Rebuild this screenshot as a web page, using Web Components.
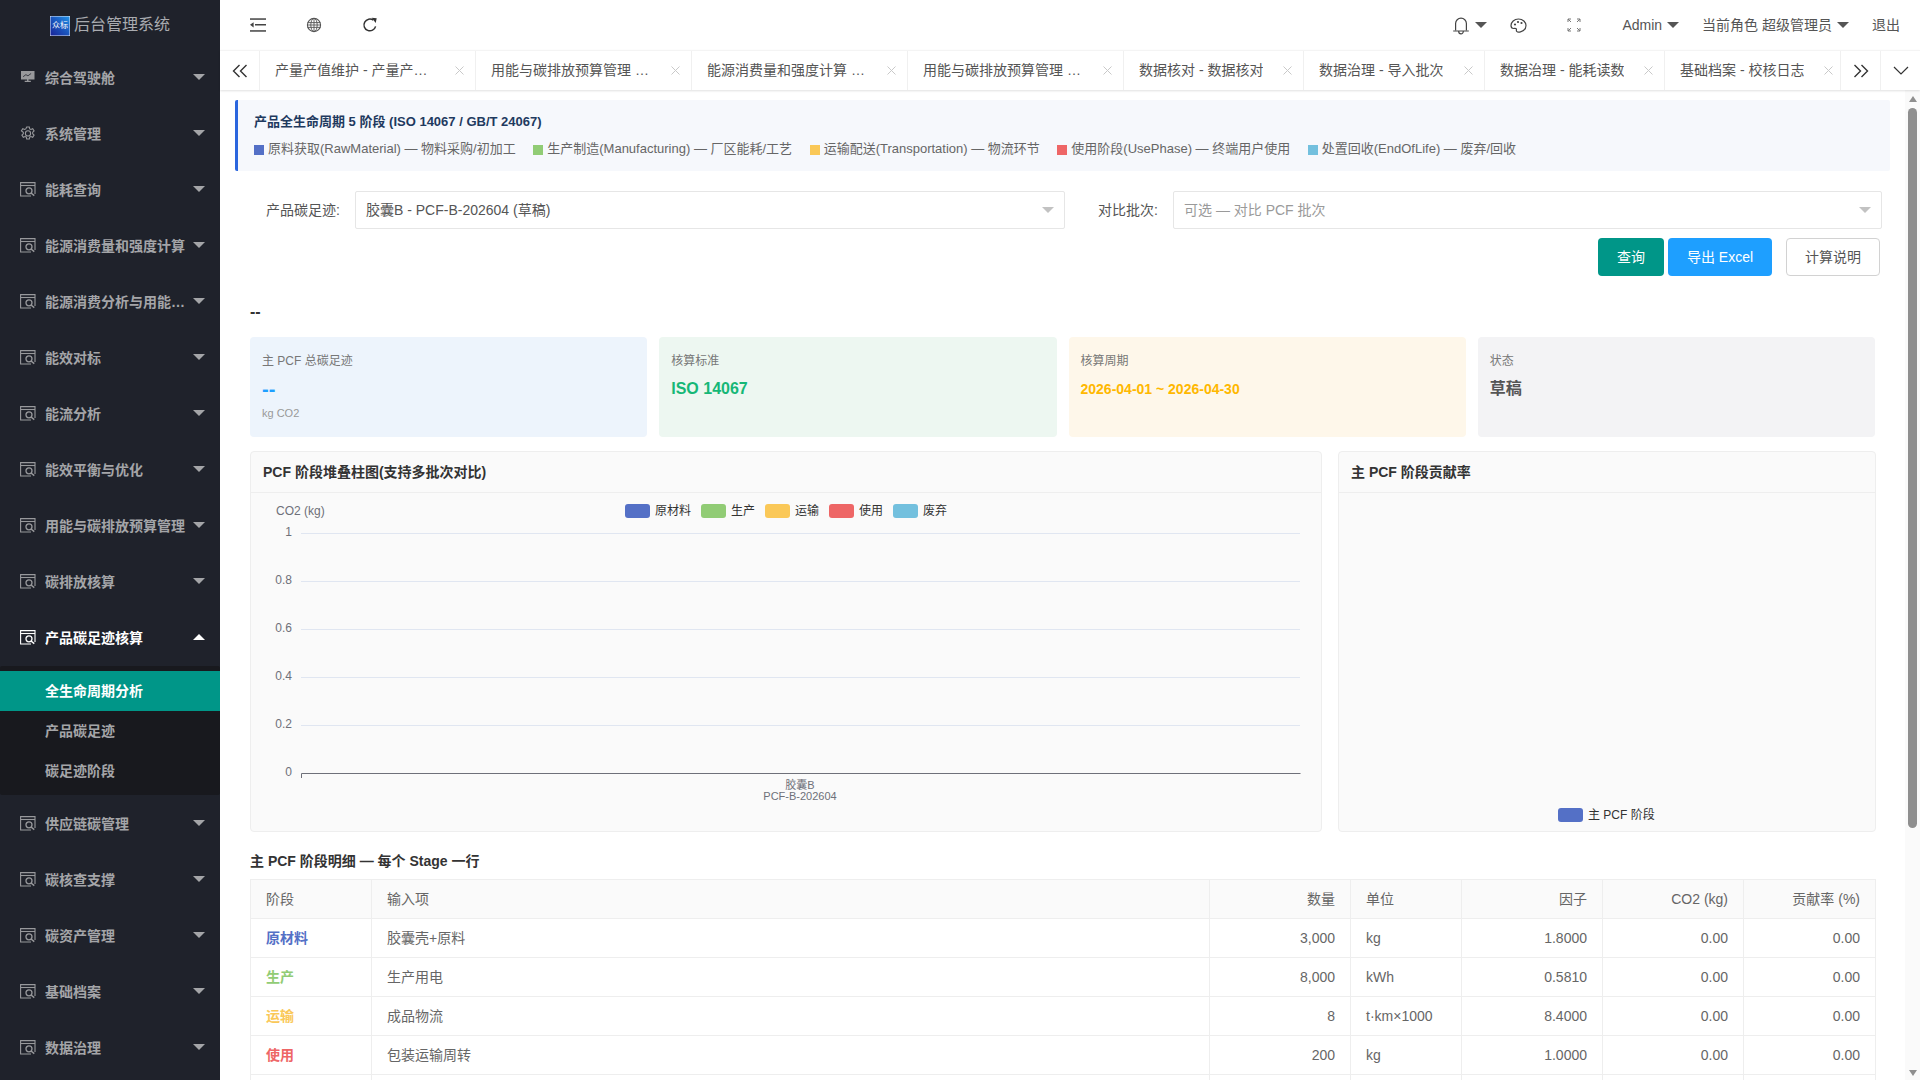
<!DOCTYPE html>
<html lang="zh-CN">
<head>
<meta charset="utf-8">
<title>后台管理系统</title>
<style>
  html, body { margin: 0; height: 100%; overflow: hidden; }
  body { font: 14px/20px "Liberation Sans", "Noto Sans CJK SC", sans-serif; color: #666; background: #fff; }
</style>
</head>
<body>
<app-shell>
  <side-menu slot="side">
    <side-item icon="screen" label="综合驾驶舱"></side-item>
    <side-item icon="gear" label="系统管理"></side-item>
    <side-item label="能耗查询"></side-item>
    <side-item label="能源消费量和强度计算"></side-item>
    <side-item label="能源消费分析与用能优化"></side-item>
    <side-item label="能效对标"></side-item>
    <side-item label="能流分析"></side-item>
    <side-item label="能效平衡与优化"></side-item>
    <side-item label="用能与碳排放预算管理"></side-item>
    <side-item label="碳排放核算"></side-item>
    <side-item label="产品碳足迹核算" open>
      <side-sub active>全生命周期分析</side-sub>
      <side-sub>产品碳足迹</side-sub>
      <side-sub>碳足迹阶段</side-sub>
    </side-item>
    <side-item label="供应链碳管理"></side-item>
    <side-item label="碳核查支撑"></side-item>
    <side-item label="碳资产管理"></side-item>
    <side-item label="基础档案"></side-item>
    <side-item label="数据治理"></side-item>
  </side-menu>
  <top-bar slot="top"></top-bar>
  <tab-strip slot="top">
    <tab-item width="216">产量产值维护 - 产量产值录入</tab-item>
    <tab-item width="216">用能与碳排放预算管理 - 预算编制</tab-item>
    <tab-item width="216">能源消费量和强度计算 - 消费量</tab-item>
    <tab-item width="216">用能与碳排放预算管理 - 预算执行</tab-item>
    <tab-item width="180">数据核对 - 数据核对</tab-item>
    <tab-item width="181">数据治理 - 导入批次</tab-item>
    <tab-item width="180">数据治理 - 能耗读数</tab-item>
    <tab-item width="180">基础档案 - 校核日志</tab-item>
  </tab-strip>
  <pcf-page></pcf-page>
  <fake-scroll></fake-scroll>
</app-shell>

<script>
const ICONS = {
  screen: `<svg width="16" height="16" viewBox="0 0 16 16"><path fill="currentColor" fill-rule="evenodd" d="M1 1h13.500v8.500H8.500v1.300h2.300V12H4.700v-1.200H7V9.500H1zM3.300 7l2.600-2 2 1.200 3.400-2.500-.4-.4-3 2.200-2-1.200-3 2.300z"/></svg>`,
  gear: `<svg width="16" height="16" viewBox="0 0 16 16" fill="none" stroke="currentColor" stroke-width="1.100"><path d="M6.700.600h2.600l.4 1.900 1.200.6 1.800-.8 1.400 2.200-1.400 1.300v1.600l1.400 1.300-1.400 2.200-1.800-.8-1.200.6-.4 1.900H6.700l-.4-1.900-1.200-.6-1.800.8-1.400-2.200 1.400-1.300V5.800L1.400 4.500l1.400-2.200 1.800.8 1.200-.6z" transform="translate(0 .4)"/><circle cx="8" cy="7.400" r="2.600"/></svg>`,
  form: `<svg width="16" height="16" viewBox="0 0 16 16" fill="none" stroke="currentColor" stroke-width="1.100"><path d="M15 12V.600H.600v13.400H11"/><path d="M.600 3.500h14.400"/><circle cx="9" cy="8.800" r="3" stroke-width="1.300"/><path d="M11 11l3.300 2.700" stroke-width="1.500"/></svg>`
};

class AppShell extends HTMLElement {
  constructor() {
    super();
    this.attachShadow({ mode: 'open' });
    this.shadowRoot.innerHTML = `
      <style>
        :host { display: grid; grid-template-columns: 220px 1fr; height: 100vh; overflow: hidden; }
        #side { background: #1f222b; overflow: hidden; }
        #right { display: flex; flex-direction: column; min-width: 0; min-height: 0; }
        #body { flex: 1; display: flex; min-height: 0; }
      </style>
      <div id="side"><slot name="side"></slot></div>
      <div id="right">
        <slot name="top"></slot>
        <div id="body"><slot></slot></div>
      </div>`;
  }
}

class SideMenu extends HTMLElement {
  constructor() {
    super();
    this.attachShadow({ mode: 'open' });
    this.shadowRoot.innerHTML = `
      <style>
        :host { display: block; }
        #logo { height: 49px; display: flex; align-items: center; padding-left: 50px; gap: 4px; color: #a9abb0; font-size: 16px; box-sizing: border-box; }
        svg { display: block; position: relative; top: 1.500px; }
        .mini { font-size: 8px; fill: #fff; }
      </style>
      <div id="logo">
        <svg width="20" height="20" viewBox="0 0 20 20">
          <defs><linearGradient id="g" x1="0" y1="1" x2="1" y2="0"><stop offset="0" stop-color="#1a2196"/><stop offset=".5" stop-color="#1a55bd"/><stop offset="1" stop-color="#2397ea"/></linearGradient></defs>
          <rect width="20" height="20" fill="url(#g)"/>
          <rect x=".25" y=".25" width="19.500" height="19.500" fill="none" stroke="#dfe7f5" stroke-width=".5"/>
          <text class="mini" x="10" y="12" text-anchor="middle">众标</text>
        </svg>
        <span>后台管理系统</span>
      </div>
      <slot></slot>`;
  }
}

class SideItem extends HTMLElement {
  constructor() {
    super();
    this.attachShadow({ mode: 'open' });
    const open = this.hasAttribute('open');
    const icon = ICONS[this.getAttribute('icon') || 'form'];
    this.shadowRoot.innerHTML = `
      <style>
        :host { display: block; }
        #row { height: 56px; display: flex; align-items: center; padding-left: 20px; color: ${open ? '#fff' : '#a4a5a8'}; font-weight: bold; box-sizing: border-box; position: relative; }
        #icon { width: 16px; height: 16px; margin-right: 9px; flex: none; position: relative; top: 1px; ${open ? '' : 'color: #98999c;'} }
        #label { width: 147px; white-space: nowrap; overflow: hidden; text-overflow: ellipsis; position: relative; top: 1px; }
        #arrow { position: absolute; left: 193px; top: 25px; width: 0; height: 0; border: 6px solid transparent; ${open ? 'border-bottom-color: #fff; border-top: 0;' : 'border-top-color: #a4a5a8; border-bottom: 0;'} }
        #sub { background: #18191e; padding: 5px 0 4px; margin-top: 1px; border-radius: 2px; display: ${open ? 'block' : 'none'}; }
      </style>
      <div id="row"><span id="icon">${icon}</span><span id="label">${this.getAttribute('label')}</span><i id="arrow"></i></div>
      <div id="sub"><slot></slot></div>`;
  }
}

class SideSub extends HTMLElement {
  constructor() {
    super();
    this.attachShadow({ mode: 'open' });
    const active = this.hasAttribute('active');
    this.shadowRoot.innerHTML = `
      <style>
        :host { display: flex; align-items: center; height: 40px; box-sizing: border-box; padding: 0 0 1px 45px; font-weight: bold;
          color: ${active ? '#fff' : '#a4a5a8'}; background: ${active ? '#009688' : 'transparent'}; }
      </style>
      <slot></slot>`;
  }
}

class TopBar extends HTMLElement {
  constructor() {
    super();
    this.attachShadow({ mode: 'open' });
    this.shadowRoot.innerHTML = `
      <style>
        :host { display: flex; height: 50px; align-items: center; padding-left: 30px; padding-right: 20px; box-sizing: border-box; color: #555; flex: none; }
        svg { display: block; flex: none; }
        .caret { width: 0; height: 0; border: 6px solid transparent; border-top-color: #555; border-bottom: 0; flex: none; margin-left: 5px; }
        .push { flex: 1; }
        .txt { white-space: nowrap; }
      </style>
      <svg width="16" height="14" viewBox="0 0 16 14" fill="#444" style="margin-right:40px"><rect width="16" height="1.500" y=".3"/><rect x="5" y="6" width="11" height="1.500"/><rect y="12.200" width="16" height="1.500"/><path d="M3.600 4.200v5.200L0 6.800z"/></svg>
      <svg width="16" height="16" viewBox="0 0 16 16" fill="none" stroke="#555" stroke-width=".9" style="margin-right:40px"><circle cx="8" cy="8" r="6.600" stroke-width="1.100"/><ellipse cx="8" cy="8" rx="3.200" ry="6.600"/><path d="M8 1.400v13.200M1.600 5.600h12.800M1.400 8h13.200M1.600 10.400h12.800"/></svg>
      <svg width="16" height="16" viewBox="0 0 16 16" fill="none" stroke="#333" stroke-width="1.500"><path d="M13.600 9.400A5.900 5.900 0 1 1 11.400 3.200"/><path fill="#333" stroke="none" d="M9.700.700l5 .5-1 4.900z"/></svg>
      <span class="push"></span>
      <svg width="18" height="18" viewBox="0 0 18 18" fill="none" stroke="#444" stroke-width="1.200" style="position:relative;top:1px"><path d="M3.600 13.300V6.600a5.400 5.400 0 0 1 10.800 0v6.700M1.200 14h15.600M6.700 14.500a2.300 2.300 0 0 0 4.600 0"/></svg>
      <i class="caret" style="margin-left:5px;margin-right:23px"></i>
      <svg width="17" height="15" viewBox="0 0 17 15" fill="none" stroke="#444" stroke-width="1.200" style="margin-right:40px"><path d="M8.500 1C4.200 1 1 4 1 7.600c0 1.900 1.200 2.900 2.600 2.900 1.200 0 2-.3 2.600.2.800.7-.4 1.800.5 2.700.7.700 2.300.8 3.800.4C13.600 13 16 10.600 16 7.600 16 4 12.800 1 8.500 1z"/><circle cx="5" cy="6.500" r="1.100" fill="#444" stroke="none"/><circle cx="8" cy="4" r="1.100" fill="#444" stroke="none"/><circle cx="11.500" cy="5" r="1.100" fill="#444" stroke="none"/></svg>
      <svg width="14" height="14" viewBox="0 0 14 14" fill="none" stroke="#777" stroke-width="1" style="margin-right:41px"><path d="M1 4V1h3M1 1l3 3M13 4V1h-3M13 1l-3 3M1 10v3h3M1 13l3-3M13 10v3h-3M13 13l-3-3"/></svg>
      <span class="txt">Admin</span><i class="caret"></i>
      <span class="txt" style="margin-left:23px">当前角色 超级管理员</span><i class="caret"></i>
      <span class="txt" style="margin-left:23px">退出</span>`;
  }
}

class TabStrip extends HTMLElement {
  constructor() {
    super();
    this.attachShadow({ mode: 'open' });
    const dbl = d => `<svg width="16" height="14" viewBox="0 0 16 14" fill="none" stroke="#333" stroke-width="1.400"><path d="${d}"/></svg>`;
    this.shadowRoot.innerHTML = `
      <style>
        :host { display: flex; height: 40px; box-sizing: border-box; border-top: 1px solid #f4f4f4; box-shadow: 0 1px 2px rgba(0,0,0,.12); flex: none; position: relative; z-index: 1; background: #fff; }
        .btn { width: 40px; flex: none; display: flex; align-items: center; justify-content: center; box-sizing: border-box; }
        #tabs { flex: 1; display: flex; overflow: hidden; min-width: 0; }
      </style>
      <div class="btn" style="border-right:1px solid #f0f0f0">${dbl('M7.500 1L1.500 7l6 6M14.500 1l-6 6 6 6')}</div>
      <div id="tabs"><slot></slot></div>
      <div class="btn" style="border-left:1px solid #f0f0f0">${dbl('M1.500 1l6 6-6 6M8.500 1l6 6-6 6')}</div>
      <div class="btn" style="border-left:1px solid #f0f0f0"><svg width="16" height="10" viewBox="0 0 16 10" fill="none" stroke="#333" stroke-width="1.200"><path d="M1 1l7 7 7-7"/></svg></div>`;
  }
}

class TabItem extends HTMLElement {
  constructor() {
    super();
    this.attachShadow({ mode: 'open' });
    this.shadowRoot.innerHTML = `
      <style>
        :host { display: flex; align-items: center; flex: none; width: ${this.getAttribute('width')}px; box-sizing: border-box; padding: 0 0 1px 15px; border-right: 1px solid #f0f0f0; color: #555; position: relative; }
        #t { max-width: 160px; white-space: nowrap; overflow: hidden; text-overflow: ellipsis; }
        svg { position: absolute; right: 11px; top: 15px; }
      </style>
      <span id="t"><slot></slot></span>
      <svg width="9" height="9" viewBox="0 0 9 9" stroke="#c9c9c9" stroke-width="1"><path d="M.5.500l8 8M8.500.500l-8 8"/></svg>`;
  }
}

class FakeScroll extends HTMLElement {
  constructor() {
    super();
    this.attachShadow({ mode: 'open' });
    this.shadowRoot.innerHTML = `
      <style>
        :host { display: flex; flex-direction: column; align-items: center; width: 15px; flex: none; background: #fafafa; }
        .up, .down { width: 0; height: 0; border: 4.500px solid transparent; }
        .up { border-bottom: 6px solid #8f8f8f; border-top: 0; margin-top: 6px; }
        .down { border-top: 6px solid #8f8f8f; border-bottom: 0; margin-bottom: 4px; }
        #thumb { width: 9px; height: 720px; border-radius: 5px; background: #8f8f8f; margin-top: 6px; }
        .fill { flex: 1; }
      </style>
      <i class="up"></i><div id="thumb"></div><div class="fill"></div><i class="down"></i>`;
  }
}

class StageNote extends HTMLElement {
  constructor() {
    super();
    this.attachShadow({ mode: 'open' });
    const items = [
      ['#5470c6', '原料获取(RawMaterial) — 物料采购/初加工'],
      ['#91cc75', '生产制造(Manufacturing) — 厂区能耗/工艺'],
      ['#fac858', '运输配送(Transportation) — 物流环节'],
      ['#ee6666', '使用阶段(UsePhase) — 终端用户使用'],
      ['#73c0de', '处置回收(EndOfLife) — 废弃/回收']
    ];
    this.shadowRoot.innerHTML = `
      <style>
        :host { display: block; background: #f6f8fc; border-left: 3px solid #2b66de; border-radius: 2px; height: 71px; box-sizing: border-box; padding: 13px 16px; }
        h4 { margin: 0; font-size: 13px; line-height: 18px; color: #1f3a5f; font-weight: bold; }
        #list { display: flex; margin-top: 9px; gap: 17.500px; font-size: 13px; line-height: 18px; color: #666; }
        .i { display: flex; align-items: center; white-space: nowrap; }
        .i b { width: 10px; height: 10px; margin-right: 4px; position: relative; top: 1px; }
      </style>
      <h4>产品全生命周期 5 阶段 (ISO 14067 / GB/T 24067)</h4>
      <div id="list">${items.map(([c, t]) => `<span class="i"><b style="background:${c}"></b>${t}</span>`).join('')}</div>`;
  }
}

class SelectBox extends HTMLElement {
  constructor() {
    super();
    this.attachShadow({ mode: 'open' });
    const ph = this.hasAttribute('placeholder');
    this.shadowRoot.innerHTML = `
      <style>
        :host { display: flex; align-items: center; height: 38px; box-sizing: border-box; border: 1px solid #e6e6e6; border-radius: 2px; padding-left: 10px; position: relative; background: #fff; color: ${ph ? '#9a9a9a' : '#555'}; }
        i { position: absolute; right: 10px; top: 15px; width: 0; height: 0; border: 6px solid transparent; border-top-color: #c2c2c2; border-bottom: 0; }
      </style>
      <slot></slot><i></i>`;
  }
}

class PcfBtn extends HTMLElement {
  constructor() {
    super();
    this.attachShadow({ mode: 'open' });
    const kind = this.getAttribute('kind');
    const c = { green: 'background:#009688;color:#fff;', blue: 'background:#1e9fff;color:#fff;', plain: 'background:#fff;color:#555;border:1px solid #d2d2d2;' }[kind];
    this.shadowRoot.innerHTML = `
      <style>
        :host { display: flex; align-items: center; justify-content: center; height: 38px; box-sizing: border-box; border-radius: 4px; ${c} width: ${this.getAttribute('w')}px; }
      </style>
      <slot></slot>`;
  }
}

class StatCard extends HTMLElement {
  constructor() {
    super();
    this.attachShadow({ mode: 'open' });
    this.shadowRoot.innerHTML = `
      <style>
        :host { display: block; height: 100px; box-sizing: border-box; border-radius: 4px; padding: 12px; background: ${this.getAttribute('bg')}; }
        #l { font-size: 12px; line-height: 24px; color: #777; }
        #v { font-size: ${this.getAttribute('size') || 16}px; font-weight: bold; line-height: 30px; color: ${this.getAttribute('color')}; white-space: nowrap; position: relative; top: 1px; }
        #s { font-size: 11px; line-height: 20px; color: #999; }
      </style>
      <div id="l">${this.getAttribute('label')}</div>
      <div id="v">${this.getAttribute('value')}</div>
      ${this.getAttribute('sub') ? `<div id="s">${this.getAttribute('sub')}</div>` : ''}`;
  }
}

class ChartPanel extends HTMLElement {
  constructor() {
    super();
    this.attachShadow({ mode: 'open' });
    this.shadowRoot.innerHTML = `
      <style>
        :host { display: block; height: 381px; box-sizing: border-box; border: 1px solid #eee; border-radius: 4px; background: #fafafa; }
        #h { height: 41px; box-sizing: border-box; border-bottom: 1px solid #eee; display: flex; align-items: center; padding: 0 0 1px 12px; font-weight: bold; color: #333; font-size: 14px; }
      </style>
      <div id="h">${this.getAttribute('title')}</div>
      <slot></slot>`;
  }
}

class StackChart extends HTMLElement {
  constructor() {
    super();
    this.attachShadow({ mode: 'open' });
    const ys = [[40, '1'], [88, '0.8'], [136, '0.6'], [184, '0.4'], [232, '0.2']];
    const legend = [['#5470c6', '原材料', 374], ['#91cc75', '生产', 450], ['#fac858', '运输', 514], ['#ee6666', '使用', 578], ['#73c0de', '废弃', 642]];
    this.shadowRoot.innerHTML = `
      <style>
        :host { display: block; }
        svg { display: block; font-family: "Liberation Sans", "Noto Sans CJK SC", sans-serif; }
        .a { font-size: 12px; fill: #6e7079; }
        .l { font-size: 12px; fill: #333; }
        .x { font-size: 11px; fill: #6e7079; }
      </style>
      <svg width="1070" height="338">
        <text class="a" x="25" y="22">CO2 (kg)</text>
        ${legend.map(([c, t, x]) => `<rect x="${x}" y="11" width="25" height="14" rx="3" fill="${c}"/><text class="l" x="${x + 30}" y="22">${t}</text>`).join('')}
        ${ys.map(([y, t]) => `<line x1="50" x2="1049" y1="${y + .5}" y2="${y + .5}" stroke="#e0e6f1"/><text class="a" x="41" y="${y + 3}" text-anchor="end">${t}</text>`).join('')}
        <text class="a" x="41" y="283" text-anchor="end">0</text>
        <path d="M50.500 285V280.500H1049.500" fill="none" stroke="#6e7079"/>
        <text class="x" x="549" y="296" text-anchor="middle">胶囊B</text>
        <text class="x" x="549" y="307" text-anchor="middle">PCF-B-202604</text>
      </svg>`;
  }
}

class ShareChart extends HTMLElement {
  constructor() {
    super();
    this.attachShadow({ mode: 'open' });
    this.shadowRoot.innerHTML = `
      <style>
        :host { display: block; }
        svg { display: block; font-family: "Liberation Sans", "Noto Sans CJK SC", sans-serif; }
      </style>
      <svg width="536" height="338">
        <rect x="219" y="315" width="25" height="14" rx="3" fill="#5470c6"/>
        <text x="249" y="326" font-size="12" fill="#333">主 PCF 阶段</text>
      </svg>`;
  }
}

class StageTable extends HTMLElement {
  constructor() {
    super();
    this.attachShadow({ mode: 'open' });
    const rows = [
      ['原材料', '#5470c6', '胶囊壳+原料', '3,000', 'kg', '1.8000'],
      ['生产', '#91cc75', '生产用电', '8,000', 'kWh', '0.5810'],
      ['运输', '#fac858', '成品物流', '8', 't·km×1000', '8.4000'],
      ['使用', '#ee6666', '包装运输周转', '200', 'kg', '1.0000']
    ];
    this.shadowRoot.innerHTML = `
      <style>
        :host { display: block; }
        table { width: 1625px; table-layout: fixed; border-collapse: collapse; color: #666; font-size: 14px; line-height: 20px; }
        th, td { height: 39px; box-sizing: border-box; padding: 0 15px; border: 1px solid #eee; font-weight: normal; text-align: left; white-space: nowrap; }
        th { background: #fafafa; }
        .r { text-align: right; }
        .s { font-weight: bold; }
      </style>
      <table>
        <colgroup><col style="width:121px"><col style="width:838px"><col style="width:141px"><col style="width:111px"><col style="width:141px"><col style="width:141px"><col style="width:132px"></colgroup>
        <thead><tr><th>阶段</th><th>输入项</th><th class="r">数量</th><th>单位</th><th class="r">因子</th><th class="r">CO2 (kg)</th><th class="r">贡献率 (%)</th></tr></thead>
        <tbody>
          ${rows.map(([s, c, n, q, u, f]) => `<tr><td class="s" style="color:${c}">${s}</td><td>${n}</td><td class="r">${q}</td><td>${u}</td><td class="r">${f}</td><td class="r">0.00</td><td class="r">0.00</td></tr>`).join('')}
          <tr><td></td><td></td><td></td><td></td><td></td><td></td><td></td></tr>
        </tbody>
      </table>`;
  }
}

class PcfPage extends HTMLElement {
  constructor() {
    super();
    this.attachShadow({ mode: 'open' });
    this.shadowRoot.innerHTML = `
      <style>
        :host { display: block; flex: 1; min-width: 0; overflow: hidden; padding: 10px 15px 0; box-sizing: border-box; }
        #form { display: grid; grid-template-columns: 105px 710px 108px 709px; margin: 20px 0 0 15px; align-items: center; }
        label { text-align: right; padding: 0 15px 0 0; color: #555; }
        #btns { display: flex; justify-content: flex-end; margin: 9px 10px 0 0; }
        #name { margin: 26px 15px 0; font-size: 16px; line-height: 20px; font-weight: bold; color: #333; height: 22px; }
        #cards { display: grid; grid-template-columns: repeat(4, 1fr); gap: 12px; margin: 13px 15px 0; }
        #charts { display: grid; grid-template-columns: 2fr 1fr; gap: 16px; margin: 14px 15px 0; }
        #sec { margin: 19px 15px 0; font-size: 14px; font-weight: bold; line-height: 20px; color: #333; }
        stage-table { margin: 8px 15px 0; }
      </style>
      <stage-note></stage-note>
      <div id="form">
        <label>产品碳足迹:</label><select-box>胶囊B - PCF-B-202604 (草稿)</select-box>
        <label>对比批次:</label><select-box placeholder>可选 — 对比 PCF 批次</select-box>
      </div>
      <div id="btns">
        <pcf-btn kind="green" w="66">查询</pcf-btn>
        <pcf-btn kind="blue" w="104" style="margin-left:4px">导出 Excel</pcf-btn>
        <pcf-btn kind="plain" w="94" style="margin-left:14px">计算说明</pcf-btn>
      </div>
      <div id="name">--</div>
      <div id="cards">
        <stat-card bg="#edf4fc" color="#1e9fff" size="20" label="主 PCF 总碳足迹" value="--" sub="kg CO2"></stat-card>
        <stat-card bg="#edf7f1" color="#16b777" label="核算标准" value="ISO 14067"></stat-card>
        <stat-card bg="#fef7ea" color="#ffb800" size="14" label="核算周期" value="2026-04-01 ~ 2026-04-30"></stat-card>
        <stat-card bg="#f3f3f5" color="#555" label="状态" value="草稿"></stat-card>
      </div>
      <div id="charts">
        <chart-panel title="PCF 阶段堆叠柱图(支持多批次对比)"><stack-chart></stack-chart></chart-panel>
        <chart-panel title="主 PCF 阶段贡献率"><share-chart></share-chart></chart-panel>
      </div>
      <div id="sec">主 PCF 阶段明细 — 每个 Stage 一行</div>
      <stage-table></stage-table>`;
  }
}

customElements.define('app-shell', AppShell);
customElements.define('side-menu', SideMenu);
customElements.define('side-item', SideItem);
customElements.define('side-sub', SideSub);
customElements.define('top-bar', TopBar);
customElements.define('tab-strip', TabStrip);
customElements.define('tab-item', TabItem);
customElements.define('fake-scroll', FakeScroll);
customElements.define('stage-note', StageNote);
customElements.define('select-box', SelectBox);
customElements.define('pcf-btn', PcfBtn);
customElements.define('stat-card', StatCard);
customElements.define('chart-panel', ChartPanel);
customElements.define('stack-chart', StackChart);
customElements.define('share-chart', ShareChart);
customElements.define('stage-table', StageTable);
customElements.define('pcf-page', PcfPage);
</script>
</body>
</html>
